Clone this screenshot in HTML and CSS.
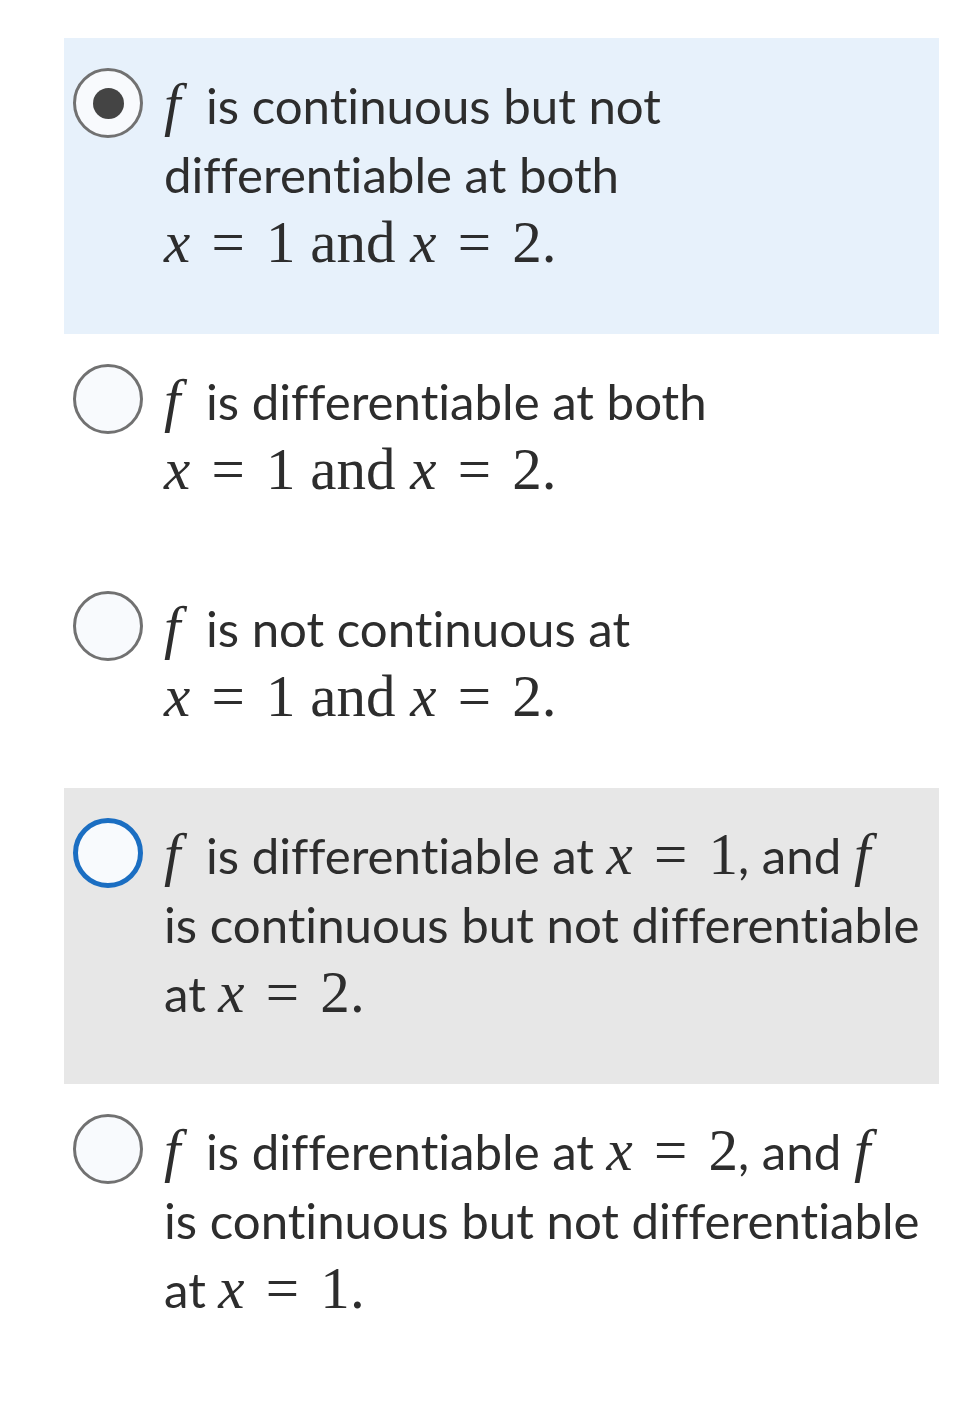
FILE: index.html
```html
<!DOCTYPE html>
<html lang="en">
	<head>
		<meta charset="UTF-8" />
		<meta name="viewport" content="width=device-width, initial-scale=1.0" />
		<title>Multiple Choice</title>
		<link rel="stylesheet" href="styles.css">
	</head>
	<body>
		<ul class="choices">
			<li class="choice selected">
				<span class="radio"></span>
				<div class="label">
					<span class="math"><i class="fn">f</i></span> is continuous but not
					differentiable at both
					<span class="math"><i>x</i><span class="rel">=</span>1 and <i>x</i><span class="rel">=</span>2.</span>
				</div>
			</li>
			<li class="choice">
				<span class="radio"></span>
				<div class="label">
					<span class="math"><i class="fn">f</i></span> is differentiable at both
					<span class="math"><i>x</i><span class="rel">=</span>1 and <i>x</i><span class="rel">=</span>2.</span>
				</div>
			</li>
			<li class="choice">
				<span class="radio"></span>
				<div class="label">
					<span class="math"><i class="fn">f</i></span> is not continuous at
					<span class="math"><i>x</i><span class="rel">=</span>1 and <i>x</i><span class="rel">=</span>2.</span>
				</div>
			</li>
			<li class="choice hover">
				<span class="radio"></span>
				<div class="label">
					<span class="math"><i class="fn">f</i></span> is differentiable at
					<span class="math"><i>x</i><span class="rel">=</span>1</span>, and
					<span class="math"><i class="fn">f</i></span> is continuous but not
					differentiable at <span class="math"><i>x</i><span class="rel">=</span>2.</span>
				</div>
			</li>
			<li class="choice">
				<span class="radio"></span>
				<div class="label">
					<span class="math"><i class="fn">f</i></span> is differentiable at
					<span class="math"><i>x</i><span class="rel">=</span>2</span>, and
					<span class="math"><i class="fn">f</i></span> is continuous but not
					differentiable at <span class="math"><i>x</i><span class="rel">=</span>1.</span>
				</div>
			</li>
		</ul>
	</body>
</html>
```

FILE: styles.css
```css
body {
	margin: 0;
	background: #fff;
	font-family: Lato, "Open Sans", sans-serif;
	color: #2d2d2d;
}
.choices {
	list-style: none;
	margin: 0;
	padding: 38px 40px 0 64px;
}
.choice {
	display: flex;
	align-items: flex-start;
	gap: 21px;
	padding: 32px 16px 57px 9px;
	font-size: 49.2px;
	line-height: 69px;
	font-variant-ligatures: none;
}
.choice.selected {
	background-color: #e7f1fb;
}
.choice.hover {
	background-color: #e7e7e7;
}
.radio {
	flex: none;
	box-sizing: border-box;
	width: 70px;
	height: 70px;
	margin-top: -2px;
	border: 3px solid #717171;
	border-radius: 50%;
	background-color: #f8fafd;
	display: flex;
	align-items: center;
	justify-content: center;
}
.selected .radio::after {
	content: "";
	width: 31px;
	height: 31px;
	border-radius: 50%;
	background-color: #444;
}
.hover .radio {
	border: 5px solid #1b6ec2;
}
.label {
	flex: 1;
}
.math {
	font-family: "Liberation Serif", "DejaVu Serif", serif;
	font-size: 1.2em;
	line-height: 1;
	white-space: nowrap;
}
.math i {
	font-style: italic;
}
.math .fn {
	margin-right: 0.22em;
}
.rel {
	margin: 0 0.36em;
}
```
